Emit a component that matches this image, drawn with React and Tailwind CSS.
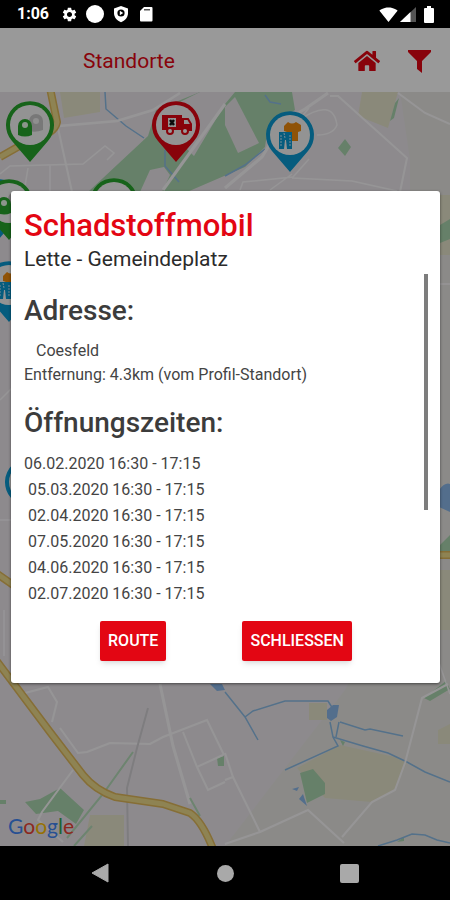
import React, { useState } from "react";
import { FaHome } from "react-icons/fa";
import { MdSettings, MdSignalWifi4Bar } from "react-icons/md";

const OPENING_TIMES = [
  "06.02.2020 16:30 - 17:15",
  "05.03.2020 16:30 - 17:15",
  "02.04.2020 16:30 - 17:15",
  "07.05.2020 16:30 - 17:15",
  "04.06.2020 16:30 - 17:15",
  "02.07.2020 16:30 - 17:15",
];

const GREEN = "#27a52c";
const RED = "#e30613";
const BLUE = "#0a9ad2";

const StatusBar = () => (
  <div className="flex h-7 items-center justify-between bg-black pl-[17px] pr-4 text-white">
    <div className="flex items-center gap-2">
      <span className="mr-1 text-base font-bold leading-7">1:06</span>
      <MdSettings size={17} />
      <span className="h-[18px] w-[18px] rounded-full bg-white" />
      <svg width="18" height="18" viewBox="0 0 18 18" className="fill-current">
        <path d="M9 1l7 2.500V8c0 4.500-3 7.500-7 9.200C5 15.500 2 12.500 2 8V3.500z" />
        <circle cx="9" cy="8" r="3.600" fill="#000" />
        <path d="M7.800 5.800l3.400 2.200-3.400 2.200z" />
      </svg>
      <svg width="16" height="18" viewBox="0 0 16 18" className="fill-current">
        <path d="M6 2h7.500a1 1 0 011 1v12.500a1 1 0 01-1 1H3a1 1 0 01-1-1V6z" />
        <path d="M6 4h6v1.500H6z" fill="#555" />
      </svg>
    </div>
    <div className="flex items-center gap-[2px]">
      <MdSignalWifi4Bar size={19} />
      <svg width="16" height="16" viewBox="0 0 16 16">
        <path d="M0 16L16 1v15z" fill="#555" />
        <path d="M0 16L10.500 6v10z" fill="#fff" />
      </svg>
      <svg width="10" height="17" viewBox="0 0 10 17" className="ml-[6px] fill-current">
        <path d="M3 0h4v2h2a1 1 0 011 1v13a1 1 0 01-1 1H1a1 1 0 01-1-1V3a1 1 0 011-1h2z" />
      </svg>
    </div>
  </div>
);

const Pin = ({ x, y, color, children }) => (
  <g transform={`translate(${x} ${y})`}>
    <path d="M0 37L-18 16A24 24 0 1118 16z" fill={color} />
    <circle r="20" fill="#f6f6f6" />
    {children}
  </g>
);

const GlassIcon = () => (
  <>
    <path d="M-1 6V-4a7 7 0 0114 0V5q-7 3-14 1z" fill="#c9c9c9" />
    <circle cx="6" cy="-4" r="3" fill="#eee" />
    <path d="M-12 10V1a7 7 0 0114 0v9q-7 3-14 0z" fill={GREEN} />
    <circle cx="-5" cy="0" r="3" fill="#e8f8e8" />
  </>
);

const TruckIcon = () => (
  <>
    <path d="M-14-10H6v15H-14z" fill={RED} />
    <path d="M-8-7h8v9h-8z" fill="#f4f4f4" />
    <path d="M-6-5l4 5M-2-5l-4 5" stroke="#111" strokeWidth="2.500" />
    <path d="M7-6h5l3 5v6H7z" fill="none" stroke={RED} strokeWidth="2" />
    <path d="M7-1h8v6H7z" fill={RED} />
    <circle cx="-6" cy="6" r="3" fill="#fff" stroke={RED} strokeWidth="2" />
    <circle cx="9" cy="6" r="3" fill="#fff" stroke={RED} strokeWidth="2" />
  </>
);

const ClothesIcon = () => (
  <>
    <path d="M-2-13q4 3 8 0l5 3v6l-3 1v9H-3v-9l-3-1v-5z" fill="#ef8a0c" />
    <path d="M-11-3H2v17h-5l-1-9h-1l-1 9h-5z" fill={BLUE} />
    <path d="M-9 0v11M0 0v11M-6-2l1 5" stroke="#cdeafa" strokeWidth="1" fill="none" strokeDasharray="2 1" />
  </>
);

const StreetMap = () => (
  <svg
    className="absolute inset-0 h-full w-full"
    viewBox="0 92 450 754"
    preserveAspectRatio="xMidYMid slice"
    aria-hidden="true"
  >
    <rect y="92" width="450" height="754" fill="#ebe7ec" />
    <path d="M400 92h50v754H225L345 690 410 560V160z" fill="#e8e7e3" />

    {/* Fields and woods */}
    <g fill="#e7e4cc">
      <path d="M362 92h36l-10 36-30-12z" />
      <path d="M60 92h40v20l-36 6z" />
      <path d="M297 768l43-23 55 12 12 5-12 28-23 12-47-4z" />
      <path d="M309 703h18v17h-18z" />
      <path d="M436 195h14v60h-14zM436 570h14v60h-14zM438 730l12-6v20h-12z" />
      <path d="M90 815h34v31H84z" />
    </g>
    <g fill="#abd6af">
      <path d="M88 192l60-56 8-26 44-18h92l3 18-27 17-3 20-20 20-58 25z" />
      <path d="M345 139l6 8-6 9-7-8z" />
      <path d="M395 103l4-5-5 20-4 3z" />
      <path d="M25 802l15-3 20-11 24 22-8 14-18-13-22 3z" />
      <path d="M300 773l13-4 12 14v11l-18 9z" />
      <path d="M424 698l22-17 4 8-20 12zM340 740l5 2-2 4zM397 842l7-5v4z" />
      <path d="M440 225l10-6v20l-10 4zM440 545l10-10v18h-10z" />
      <path d="M217 758l7-2v10h-6zM0 800h6v4H0z" />
    </g>
    <path d="M225 107l10-10 24 46-21 10-13-28z" fill="#e8e5e8" />
    <path d="M200 92l-20 10v40l14 14 31-52 10-12z" fill="#ebe7ec" />
    <path d="M150 170l14-3 6 8-8 17h-22z" fill="#ebe7ec" />

    {/* Water */}
    <g fill="none" stroke="#8cbce6" strokeWidth="1.500">
      <path d="M105 92l1 17 20 17 18 12M165 150v16l14 16M265 95l5 7 11 2M225 176l20-11 20-16" />
      <path d="M225 692l20 25 13 23M245 717l8-6 32-10h43l5 8" />
      <path d="M340 722l25 8 5-1 33 7M333 737l30 9 25 7 19 9 18 10 25 10" />
      <path d="M330 722l3 15 5 9-53 24M339 722l-3 15" />
      <path d="M378 846l19-6 15-6 13 1 12 5 13 3" />
    </g>
    <g fill="#8bb8ea">
      <path d="M327 710l6-5h6l-2 12-6 4-4-3z" />
      <path d="M292 789l7-2-2 4zM299 799l4-5 4 12z" />
      <path d="M439 490q6-8 11-6v28l-11-5zM210 684h12l3 6-8 1z" />
    </g>

    {/* Side streets */}
    <g fill="none" stroke="#fbf9fb" strokeWidth="1.500">
      <path d="M59 126l58-5 36-11 27-17" strokeWidth="2.500" />
      <path d="M58 128l14 64" strokeWidth="2" />
      <path d="M0 174l10-8 73-2 22-18 9 7-7 7M28 168l-4 24M50 165v27" />
      <path d="M225 104l-62 86" strokeWidth="3" />
      <path d="M328 93l-23 16-21 12-22 36-37 31" strokeWidth="3" />
      <path d="M309 108l-10 12q34-23 38 5-4 10-20 10" />
      <path d="M330 96h8l69 62-7 34M398 93l27 20 25 11" strokeWidth="2" />
      <path d="M240 190l3-8 50-5 16-18M292 178l60 3 45 10M270 190l22-16" />
      <path d="M160 684l13 62 17 58" strokeWidth="3" />
      <path d="M60 728l18 25 9-1 23-9 40 1 13-7 44-17 17 35M183 732l14 35 26-12M197 767l11 23 17-8" strokeWidth="2" />
      <path d="M25 693l23-6 9 15-5 20M73 770l-31 42-4 8 25 22" strokeWidth="2" />
      <path d="M225 753l8 24 27 55M225 780l8-3M225 844l35-12 48-22 36 33" strokeWidth="2" />
      <path d="M448 684l-26 14-17 65-10 27-23 12-30 35" strokeWidth="2" />
      <path d="M0 400l12-12M0 520h12M4 610v46M438 284h12M438 660l12 34" />
    </g>
    <path d="M133 752l-30 42-36 44M92 826l-18 20M190 798l10 18" fill="none" stroke="#b6dcba" strokeWidth="2" />
    <path d="M148 708l-11 40-10 40 1 58" fill="none" stroke="#d3d0d4" strokeWidth="2" />

    {/* Main roads */}
    <g fill="none" stroke="#dfb75a" strokeWidth="8" strokeLinejoin="round">
      <path d="M50 88l7 34q-2 12-27 18L0 157" />
      <path d="M-4 573l20 14M436 555h18" />
      <path d="M-4 660l54 72 33 43q12 15 32 22l48 7 27 9q12 8 23 36" />
    </g>
    <g fill="none" stroke="#edda8a" strokeWidth="5" strokeLinejoin="round">
      <path d="M50 88l7 34q-2 12-27 18L0 157" />
      <path d="M-4 573l20 14M436 555h18" />
      <path d="M-4 660l54 72 33 43q12 15 32 22l48 7 27 9q12 8 23 36" />
    </g>

    {/* Markers */}
    <Pin x={-2} y={203} color={BLUE} />
    <Pin x={9} y={203} color={GREEN}><GlassIcon /></Pin>
    <Pin x={9} y={285} color={BLUE}><ClothesIcon /></Pin>
    <Pin x={29} y={482} color={BLUE} />
    <Pin x={114} y={202} color={GREEN}><GlassIcon /></Pin>
    <Pin x={30} y={125} color={GREEN}><GlassIcon /></Pin>
    <Pin x={176} y={125} color={RED}><TruckIcon /></Pin>
    <Pin x={290} y={135} color={BLUE}><ClothesIcon /></Pin>
  </svg>
);

const GoogleMark = () => (
  <span className="absolute bottom-2 left-2 font-[Lato,sans-serif] text-[21px] leading-6">
    <span className="text-[#4285f4]">G</span>
    <span className="text-[#ea4335]">o</span>
    <span className="text-[#fbbc05]">o</span>
    <span className="text-[#4285f4]">g</span>
    <span className="text-[#34a853]">l</span>
    <span className="text-[#ea4335]">e</span>
  </span>
);

const LocationDialog = ({ onClose }) => (
  <div className="absolute inset-0 flex items-center bg-black/40 pl-[11px] pr-[10px]">
    <div
      role="dialog"
      aria-labelledby="location-title"
      className="w-full rounded-[3px] bg-white pb-[22px] pl-[13px] pr-3 pt-[17px] shadow-[0_1px_3px_rgba(0,0,0,0.5)]"
    >
      <h1 id="location-title" className="text-[31px] font-medium leading-9 text-[#e30613]">
        Schadstoffmobil
      </h1>
      <p className="text-[21px] leading-[30px] text-[#2b2b2b]">Lette - Gemeindeplatz</p>

      <div className="relative">
        {/* Scroll indicator */}
        <div className="absolute right-0 top-0 h-[236px] w-1 bg-[#7d7d7d]" />

        <h2 className="pt-[21px] text-[28px] font-medium leading-8 text-[#3c3c3c]">Adresse:</h2>
        <div className="mt-3 text-base leading-6 text-[#444]">
          <p className="pl-3">Coesfeld</p>
          <p>Entfernung: 4.3km (vom Profil-Standort)</p>
        </div>

        <h2 className="mt-5 text-[28px] font-medium leading-8 text-[#3c3c3c]">Öffnungszeiten:</h2>
        <ul className="mt-3 text-base leading-[26px] text-[#444]">
          {OPENING_TIMES.map((time, i) => (
            <li key={time} className={i > 0 ? "pl-1" : ""}>{time}</li>
          ))}
        </ul>
      </div>

      <div className="mt-[14px] flex justify-evenly">
        <button
          type="button"
          className="h-10 rounded-[2px] bg-[#e30613] px-2 text-base font-medium text-white shadow-md"
        >
          ROUTE
        </button>
        <button
          type="button"
          onClick={onClose}
          className="h-10 rounded-[2px] bg-[#e30613] px-2 text-base font-medium text-white shadow-md"
        >
          SCHLIESSEN
        </button>
      </div>
    </div>
  </div>
);

const NavBar = () => (
  <nav className="flex h-[54px] items-center bg-black px-[38px]">
    <button type="button" aria-label="Zurück" className="flex flex-1 justify-center">
      <svg width="18" height="20" viewBox="0 0 18 20">
        <path d="M17 1v18L1 10z" fill="#a9a9a9" stroke="#a9a9a9" strokeLinejoin="round" />
      </svg>
    </button>
    <button type="button" aria-label="Startbildschirm" className="flex flex-1 justify-center">
      <span className="h-[17px] w-[17px] rounded-full bg-[#a9a9a9]" />
    </button>
    <button type="button" aria-label="Übersicht" className="flex flex-1 justify-center">
      <span className="h-[19px] w-[19px] rounded-[2px] bg-[#a9a9a9]" />
    </button>
  </nav>
);

const App = () => {
  const [open, setOpen] = useState(true);

  return (
    <div className="flex min-h-screen flex-col bg-black font-[Roboto,sans-serif]">
      <StatusBar />
      <div className="relative flex flex-1 flex-col">
        <header className="flex h-16 items-center bg-white pl-[83px] pr-[19px] pt-[2px] text-[#e30613]">
          <span className="flex-1 text-[21px] leading-8">Standorte</span>
          <button type="button" aria-label="Startseite" className="mr-7">
            <FaHome size={26} />
          </button>
          <button type="button" aria-label="Filter">
            <svg width="23" height="23" viewBox="0 0 23 23" className="fill-current">
              <path d="M0 0h23v2l-9 9v12l-5-4v-8L0 2z" />
            </svg>
          </button>
        </header>
        <main className="relative min-h-[560px] flex-1 overflow-hidden">
          <StreetMap />
          <GoogleMark />
        </main>
        {open && <LocationDialog onClose={() => setOpen(false)} />}
      </div>
      <NavBar />
    </div>
  );
};

export default App;
